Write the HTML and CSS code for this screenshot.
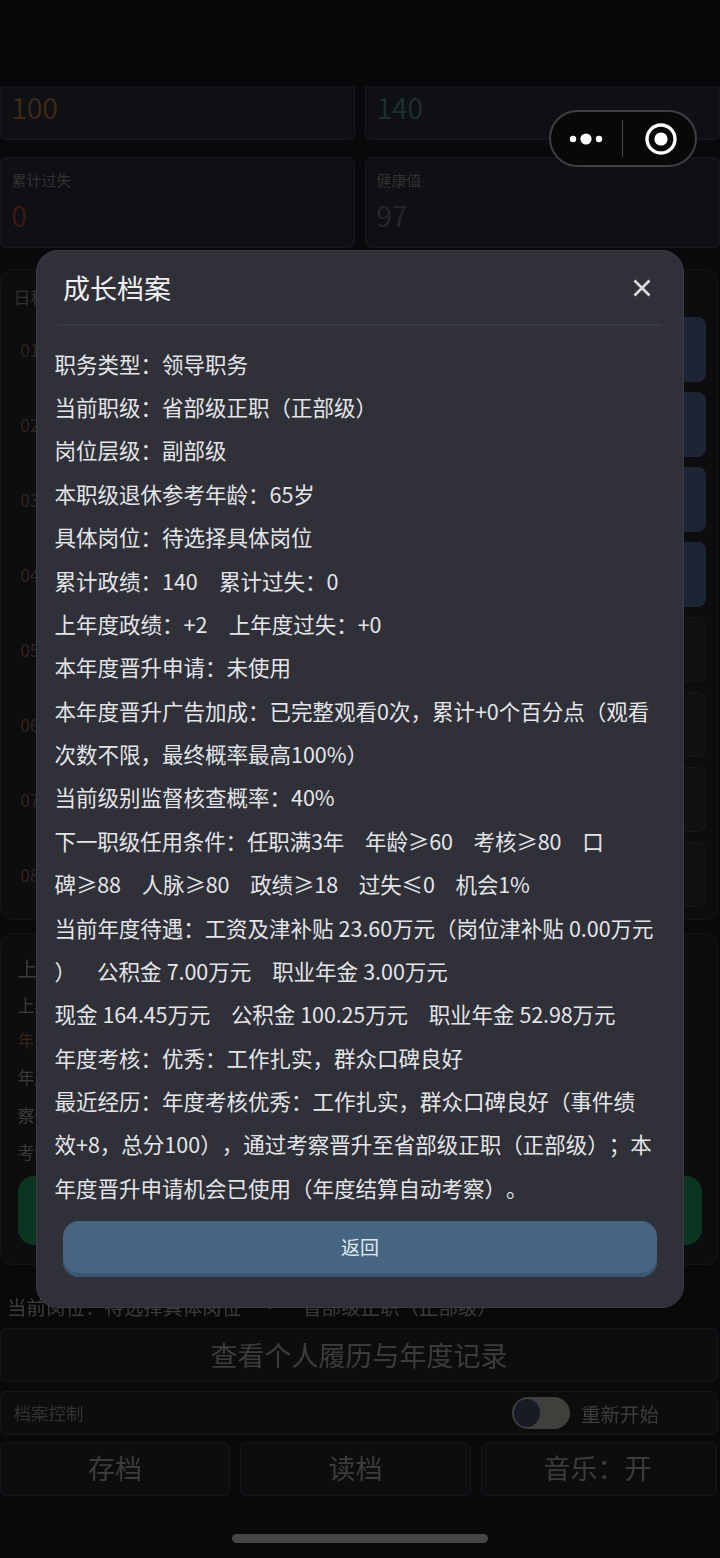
FILE: index.html
```html
<!DOCTYPE html>
<html lang="zh-CN">
<head>
  <meta charset="UTF-8">
  <meta name="viewport" content="width=device-width, initial-scale=1.0">
  <title>成长档案</title>
  <link rel="stylesheet" href="styles.css">
</head>
<body>
  <div class="page">
    <div class="topbar"></div>

    <div class="stats">
      <div class="stat stat-cut"><div class="stat-value orange">100</div></div>
      <div class="stat stat-cut"><div class="stat-value green">140</div></div>
      <div class="stat"><div class="stat-label">累计过失</div><div class="stat-value red">0</div></div>
      <div class="stat"><div class="stat-label">健康值</div><div class="stat-value grey">97</div></div>
    </div>

    <div class="panel schedule">
      <div class="panel-title">日程安排</div>
      <div class="slot"><span class="slot-num">01</span><div class="slot-btn on"></div></div>
      <div class="slot"><span class="slot-num">02</span><div class="slot-btn on"></div></div>
      <div class="slot"><span class="slot-num">03</span><div class="slot-btn on"></div></div>
      <div class="slot"><span class="slot-num">04</span><div class="slot-btn on"></div></div>
      <div class="slot"><span class="slot-num">05</span><div class="slot-btn"></div></div>
      <div class="slot"><span class="slot-num">06</span><div class="slot-btn"></div></div>
      <div class="slot"><span class="slot-num">07</span><div class="slot-btn"></div></div>
      <div class="slot"><span class="slot-num">08</span><div class="slot-btn"></div></div>
    </div>

    <div class="panel summary">
      <div class="sum-title">上年度总结</div>
      <div class="sum-line sum-first">上年度政绩：+2</div>
      <div class="sum-line sum-orange">年度考核：优秀</div>
      <div class="sum-line">年度考核优秀</div>
      <div class="sum-line sum-text">察晋升至省部级正职<span class="sum-end">）</span></div>
      <div class="sum-line">考察通过</div>
      <div class="sum-btn"></div>
    </div>

    <div class="post-line"><span>当前岗位：待选择具体岗位</span><span class="post-arrow">·</span><span>省部级正职（正部级）</span></div>

    <div class="wide-btn">查看个人履历与年度记录</div>

    <div class="control">
      <span class="control-label">档案控制</span>
      <span class="toggle"><span class="knob"></span></span>
      <span class="control-text">重新开始</span>
    </div>

    <div class="actions">
      <div class="action">存档</div>
      <div class="action">读档</div>
      <div class="action action-last">音乐：开</div>
    </div>
  </div>

  <div class="overlay">
    <div class="modal">
      <div class="modal-head">
        <div class="modal-title">成长档案</div>
        <svg class="close" width="18" height="18" viewBox="0 0 18 18"><path d="M1.5 1.5 16.5 16.5M16.5 1.5 1.5 16.5" stroke="#dcdde0" stroke-width="2.6" fill="none"/></svg>
      </div>
      <div class="modal-body">
        <p>职务类型：领导职务</p>
        <p>当前职级：省部级正职（正部级）</p>
        <p>岗位层级：副部级</p>
        <p>本职级退休参考年龄：65岁</p>
        <p>具体岗位：待选择具体岗位</p>
        <p>累计政绩：140&nbsp;&nbsp;&nbsp;&nbsp;累计过失：0</p>
        <p>上年度政绩：+2&nbsp;&nbsp;&nbsp;&nbsp;上年度过失：+0</p>
        <p>本年度晋升申请：未使用</p>
        <p>本年度晋升广告加成：已完整观看0次，累计+0个百分点（观看<br>次数不限，最终概率最高100%）</p>
        <p>当前级别监督核查概率：40%</p>
        <p class="tight">下一职级任用条件：任职满3年&nbsp;&nbsp;&nbsp;&nbsp;年龄≥60&nbsp;&nbsp;&nbsp;&nbsp;考核≥80&nbsp;&nbsp;&nbsp;&nbsp;口<br>碑≥88&nbsp;&nbsp;&nbsp;&nbsp;人脉≥80&nbsp;&nbsp;&nbsp;&nbsp;政绩≥18&nbsp;&nbsp;&nbsp;&nbsp;过失≤0&nbsp;&nbsp;&nbsp;&nbsp;机会1%</p>
        <p class="slight">当前年度待遇：工资及津补贴 23.60万元（岗位津补贴 0.00万元<br>）&nbsp;&nbsp;&nbsp;&nbsp;公积金 7.00万元&nbsp;&nbsp;&nbsp;&nbsp;职业年金 3.00万元</p>
        <p class="tight">现金 164.45万元&nbsp;&nbsp;&nbsp;&nbsp;公积金 100.25万元&nbsp;&nbsp;&nbsp;&nbsp;职业年金 52.98万元</p>
        <p>年度考核：优秀：工作扎实，群众口碑良好</p>
        <p>最近经历：年度考核优秀：工作扎实，群众口碑良好（事件绩<br>效+8，总分100），通过考察晋升至省部级正职（正部级）；本<br>年度晋升申请机会已使用（年度结算自动考察）。</p>
      </div>
      <div class="back-btn">返回</div>
    </div>
  </div>

  <div class="capsule">
    <svg width="46" height="16" viewBox="0 0 46 16"><circle cx="8" cy="8" r="3.2" fill="#fff"/><circle cx="21" cy="8" r="5.6" fill="#fff"/><circle cx="34" cy="8" r="3.2" fill="#fff"/></svg>
    <span class="capsule-line"></span>
    <svg width="34" height="34" viewBox="0 0 34 34"><circle cx="17" cy="17" r="14" stroke="#fff" stroke-width="3.4" fill="none"/><circle cx="17" cy="17" r="6.6" fill="#fff"/></svg>
  </div>

  <div class="homebar"></div>
</body>
</html>
```

FILE: styles.css
```css
* {
  box-sizing: border-box;
}

body {
  margin: 0;
  width: 720px;
  height: 1558px;
  overflow: hidden;
  position: relative;
  background: #000;
  font-family: "Noto Sans CJK SC", "Noto Sans", sans-serif;
}

p {
  margin: 0;
}

/* page behind the dialog, dimmed by .overlay */
.page {
  height: 1558px;
  background: #181a20;
  color: #a9a9a9;
  filter: blur(0.7px);
}

.topbar {
  height: 86px;
  background: #12141a;
}

.stats {
  display: grid;
  grid-template-columns: 355px 355px;
  column-gap: 10px;
  row-gap: 17px;
}

.stat {
  height: 91px;
  padding: 12px 10.5px 0;
  background: #2c2e37;
  border: 1.5px solid #41434d;
  border-radius: 6px;
}

.stat-cut {
  height: 54px;
  padding-top: 1px;
  border-top: none;
  border-radius: 0 0 6px 6px;
}

.stat-label {
  font-size: 15px;
  line-height: 20px;
  color: #8d8d8d;
}

.stat-value {
  font-size: 28px;
  line-height: 40px;
}

.stat .stat-label + .stat-value {
  margin-top: 5px;
}

.orange { color: #b0733f; }
.green { color: #4f8a78; }
.red { color: #a5493c; }
.grey { color: #6a6e78; }

.panel {
  background: #25272f;
  border: 1.5px solid #3a3c46;
  border-radius: 12px;
  width: 718px;
}

.schedule {
  height: 651px;
  margin-top: 21px;
  padding: 15px 11px 0 12.5px;
}

.panel-title {
  font-size: 17px;
  line-height: 24px;
  margin-bottom: 8px;
  color: #8d8d8d;
}

.slot {
  display: flex;
  align-items: center;
  height: 65px;
  margin-bottom: 10px;
}

.slot-num {
  width: 70px;
  padding-left: 7px;
  font-size: 17px;
  color: #8c6a50;
}

.slot-btn {
  flex: 1;
  height: 65px;
  background: #2e3038;
  border: 1.5px solid #45474f;
  border-radius: 8px;
}

.slot-btn.on {
  background: #556a96;
  border-color: #556a96;
}

.summary {
  position: relative;
  height: 332px;
  margin-top: 13px;
  padding: 18px 15.5px 0 16.5px;
}

.sum-title {
  font-size: 20px;
  line-height: 34px;
}

.sum-line {
  font-size: 17px;
  line-height: 37.5px;
  white-space: nowrap;
}

.sum-first {
  margin-bottom: -3px;
}

.sum-orange {
  color: #9a6a48;
}

.sum-text {
  position: relative;
}

.sum-end {
  position: absolute;
  left: 654px;
  top: 0;
}

.sum-btn {
  height: 69px;
  margin-top: 5px;
  background: #1f9c5e;
  border-radius: 16px;
}

.post-line {
  display: flex;
  height: 28px;
  margin-top: 28px;
  padding-left: 7px;
  font-size: 19.5px;
  line-height: 28px;
  white-space: nowrap;
}

.post-arrow {
  width: 61px;
  padding-right: 3px;
  text-align: center;
}

.wide-btn {
  width: 718px;
  height: 54px;
  margin-top: 7px;
  font-size: 27px;
  line-height: 52px;
  text-align: center;
  background: #25272f;
  border: 1.5px solid #41434d;
  border-radius: 6px;
}

.control {
  display: flex;
  align-items: center;
  width: 718px;
  height: 44px;
  margin-top: 9px;
  padding: 0 58px 0 12.5px;
  background: #25272f;
  border: 1.5px solid #41434d;
  border-radius: 6px;
}

.control-label {
  flex: 1;
  font-size: 17.5px;
  line-height: 40px;
  padding-bottom: 4px;
  height: 40px;
  color: #8d8d8d;
}

.control-text {
  margin-left: 11px;
  font-size: 19.5px;
}

.toggle {
  display: flex;
  align-items: center;
  width: 58px;
  height: 32px;
  padding-left: 2px;
  background: #b5b6a8;
  border-radius: 16px;
}

.knob {
  width: 26px;
  height: 28px;
  background: #434d6e;
  border-radius: 50%;
}

.actions {
  display: grid;
  grid-template-columns: 230px 231px 236px;
  column-gap: 10px;
  margin-top: 7px;
}

.action {
  height: 54px;
  font-size: 27px;
  line-height: 50px;
  text-align: center;
  background: #25272f;
  border: 1.5px solid #41434d;
  border-radius: 6px;
}

.action-last {
  padding-right: 3px;
}

/* dialog */
.overlay {
  position: absolute;
  inset: 0;
  padding: 250px 36px 0;
  background: rgba(0, 0, 0, 0.65);
}

.modal {
  height: 1058px;
  padding: 0 22px;
  background: #2f3038;
  border: 1.5px solid #3a3c47;
  border-radius: 22px;
  color: #e4e5e8;
}

.modal-head {
  display: flex;
  align-items: center;
  justify-content: space-between;
  height: 75px;
  margin: 0 -1px;
  padding: 0 11px 0 5px;
  border-bottom: 2px solid #383a44;
}

.modal-title {
  font-size: 27px;
  color: #f0f0f2;
}

.modal-body {
  margin: 15.7px 0 0 -4.5px;
  font-size: 21.5px;
  line-height: 43.37px;
  word-spacing: 0.5px;
  white-space: nowrap;
  text-spacing-trim: space-all;
}

.tight {
  letter-spacing: -0.12px;
}

.slight {
  letter-spacing: -0.05px;
}

.back-btn {
  height: 56px;
  margin: 12px 4px 0 4px;
  font-size: 19px;
  line-height: 52px;
  text-align: center;
  color: #dfe8f0;
  background: #456581;
  border-radius: 16px;
  box-shadow: inset 0 -4px 0 #3a556e;
}

/* mini program capsule */
.capsule {
  position: absolute;
  left: 549px;
  top: 110px;
  width: 148px;
  height: 57px;
  display: flex;
  align-items: center;
  padding-left: 14px;
  background: #08080a;
  border: 2px solid #3f3f42;
  border-radius: 29px;
}

.capsule-line {
  width: 1px;
  height: 37px;
  margin: 0 20.5px 0 11px;
  background: #48484b;
}

.homebar {
  position: absolute;
  left: 232px;
  top: 1534px;
  width: 256px;
  height: 9px;
  background: #454545;
  border-radius: 5px;
}
```
